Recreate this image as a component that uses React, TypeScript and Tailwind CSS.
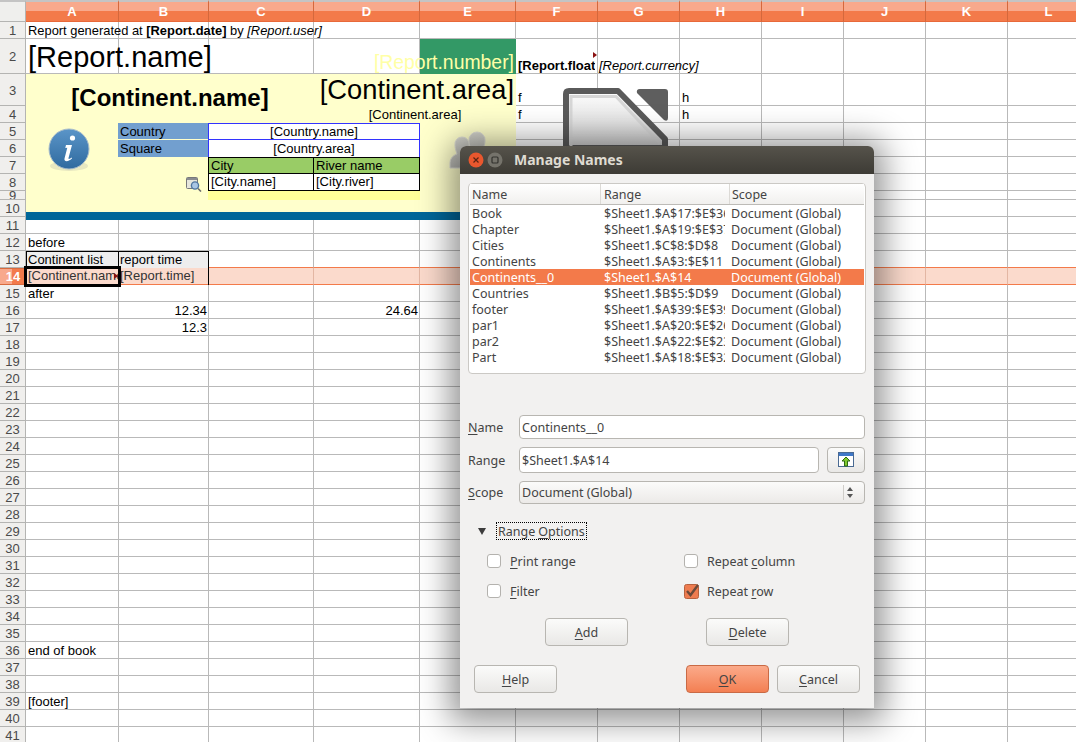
import type { ReactNode } from 'react';

const COLUMNS = ['A', 'B', 'C', 'D', 'E', 'F', 'G', 'H', 'I', 'J', 'K', 'L'];
const ROWS = Array.from({ length: 41 }, (_, i) => i + 1);

const NAMES = [
  ['Book', '$Sheet1.$A$17:$E$36'],
  ['Chapter', '$Sheet1.$A$19:$E$37'],
  ['Cities', '$Sheet1.$C$8:$D$8'],
  ['Continents', '$Sheet1.$A$3:$E$11'],
  ['Continents__0', '$Sheet1.$A$14'],
  ['Countries', '$Sheet1.$B$5:$D$9'],
  ['footer', '$Sheet1.$A$39:$E$39'],
  ['par1', '$Sheet1.$A$20:$E$26'],
  ['par2', '$Sheet1.$A$22:$E$23'],
  ['Part', '$Sheet1.$A$18:$E$32'],
];

function baseCell(row: number, col: number) {
  if (row === 14) return 'bg-[#fbdacc] border-r border-b border-r-[#e3b6a3] border-b-[#f37a4a]';
  if (row === 13) return 'border-r border-b border-r-[#b9b9b9] border-b-[#f37a4a]';
  if (row >= 3 && row <= 10 && col < 5) return 'bg-[#ffffcc]';
  return 'border-r border-b border-[#b9b9b9]';
}

function RowHeader({ row }: { row: number }) {
  const active = row === 14;
  return (
    <div
      style={{ gridColumn: 1, gridRow: row + 1 }}
      className={
        active
          ? 'flex items-center justify-center border-y border-[#d86b3f] bg-gradient-to-r from-[#f8a98c] from-45% to-[#f37a4a] to-45% pt-px font-bold text-white'
          : 'flex items-center justify-center overflow-hidden border-r border-b border-[#b4b4b2] bg-[#f0efed] pt-[2px] text-[#4a4a4a]'
      }
    >
      {row}
    </div>
  );
}

function PeopleIcon() {
  return (
    <svg width="42" height="40" viewBox="0 0 42 40">
      <defs>
        <linearGradient id="people" x1="0" y1="0" x2="0" y2="1">
          <stop offset="0" stopColor="#d2d2cb" />
          <stop offset="1" stopColor="#b5b5b0" />
        </linearGradient>
      </defs>
      <path d="M13 6a7 7 0 0 1 7 8c0 4-2 7-3 9l6 4v10H1v-4c0-5 2-8 7-10-1-3-2-6-2-9a7 7 0 0 1 7-8z" fill="url(#people)" stroke="#dcdcd4" />
      <path d="M28 1a8 8 0 0 1 8 9c0 4-2 7-3 9 5 2 8 6 8 12v6H20V25l3-6c-2-3-3-6-3-9a8 8 0 0 1 8-9z" fill="url(#people)" stroke="#dcdcd4" />
    </svg>
  );
}

function InfoIcon() {
  return (
    <svg width="42" height="44" viewBox="0 0 42 44">
      <defs>
        <linearGradient id="info" x1="0" y1="0" x2="0" y2="1">
          <stop offset="0" stopColor="#5b95c8" />
          <stop offset="1" stopColor="#2f6a9f" />
        </linearGradient>
      </defs>
      <ellipse cx="21" cy="38" rx="19" ry="5" fill="#e8e8c0" />
      <circle cx="21" cy="21" r="20" fill="url(#info)" stroke="#a8bccb" strokeWidth="1" />
      <circle cx="24.5" cy="10" r="2.6" fill="#fff" />
      <path d="M18 17h6l-3.5 13c-.3 1.2 1 1.4 3-.5l.6.8c-2.6 3.2-8.4 4.4-7.6.2l2.8-10.8-2 .2z" fill="#fff" />
    </svg>
  );
}

function MagnifierIcon() {
  return (
    <svg width="16" height="15" viewBox="0 0 16 15">
      <rect x="0.5" y="0.5" width="11" height="11" rx="1" fill="#e6e6dc" stroke="#77787a" />
      <rect x="1" y="1" width="10" height="2" fill="#8a8c90" />
      <circle cx="9" cy="8.5" r="3.6" fill="#a9c6e4" stroke="#4f76a0" strokeWidth="1.4" />
      <path d="M12 11.5l3 3" stroke="#6a6a6a" strokeWidth="1.6" />
    </svg>
  );
}

function DocIcon() {
  return (
    <svg width="106" height="58" viewBox="0 0 106 58">
      <defs>
        <linearGradient id="doc" x1="0" y1="0" x2="0" y2="1">
          <stop offset="0" stopColor="#fdfdfd" />
          <stop offset="1" stopColor="#cfcfcf" />
        </linearGradient>
      </defs>
      <path d="M3 60V6q0-3 3-3h49l47 48v9z" fill="url(#doc)" stroke="#5a5a5a" strokeWidth="6" strokeLinejoin="round" />
      <path d="M8 58V8.500h45l44 47" fill="none" stroke="#d6d6d6" strokeWidth="3" />
      <path d="M77 1h25q3 0 3 3v26q0 4-4 2L74 5q-1-4 3-4z" fill="#5e5e5e" />
    </svg>
  );
}

function Sheet() {
  return (
    <div className="grid grid-cols-[26px_93px_90px_105px_106px_96px_82px_82px_82px_82px_82px_82px_82px] grid-rows-[22px_17px_35px_32px_17px_17px_17px_17px_17px_9px_17px_repeat(31,17px)] font-['Liberation_Sans',sans-serif] text-[13px] leading-[18px] text-black">
      <div className="col-start-1 row-start-1 border-t-2 border-r border-b border-t-[#c4c4c4] border-r-[#b4b4b2] border-b-[#b4b4b2] bg-[#efefed]" />
      {COLUMNS.map((c, i) => (
        <div
          key={c}
          style={{ gridColumn: i + 2, gridRow: 1 }}
          className="flex items-center justify-center border-t-2 border-r border-b border-t-[#c4c4c4] border-r-[#d4683c] border-b-[#e8693a] bg-[linear-gradient(#f8a98c_0,#f8a98c_46%,#f37a4a_46%,#f37a4a_100%)] text-[13px] font-bold text-white"
        >
          {c}
        </div>
      ))}
      {ROWS.map((r) => (
        <RowHeader key={r} row={r} />
      ))}
      {ROWS.flatMap((r) =>
        COLUMNS.map((c, i) => (
          <div key={c + r} style={{ gridColumn: i + 2, gridRow: r + 1 }} className={baseCell(r, i)} />
        )),
      )}

      {/* report header */}
      <div className="col-start-2 row-start-2 whitespace-nowrap pl-[2px] text-[12.9px]">
        Report generated at <b>[Report.date]</b> by <i>[Report.user]</i>
      </div>
      <div className="col-start-2 row-start-3 flex items-center whitespace-nowrap pl-[2px] text-[29px] leading-[34px]">
        [Report.name]
      </div>
      <div className="col-start-6 row-start-3 flex items-end justify-end whitespace-nowrap bg-[#339966] pb-px pr-[2px] text-[19.4px] leading-[22px] text-[#ffffa6]">
        [Report.number]
      </div>
      <div className="col-start-7 row-start-3 flex w-[79px] items-end overflow-hidden whitespace-nowrap pl-[2px] font-bold leading-[17px]">
        [Report.float]
      </div>
      <div className="col-start-7 row-start-3 ml-[77px] mt-[13px] h-0 w-0 border-y-[3px] border-l-[4px] border-y-transparent border-l-[#8a1010]" />
      <div className="col-start-8 row-start-3 flex items-end whitespace-nowrap pl-px italic leading-[17px]">
        [Report.currency]
      </div>

      {/* continent block */}
      <div className="col-[2/5] row-[4/6] flex items-center justify-center pb-[2px] text-[24px] font-bold">
        [Continent.name]
      </div>
      <div className="col-[5/7] row-start-4 flex items-center justify-end whitespace-nowrap pr-[2px] text-[27.3px]">
        [Continent.area]
      </div>
      <div className="col-[5/7] row-start-5 flex items-center justify-center pt-px">[Continent.area]</div>
      <div className="col-start-2 row-[6/10] ml-[22px] mt-[5px]">
        <InfoIcon />
      </div>
      <div className="col-start-3 row-start-6 -ml-px border-b border-[#ffffcc] bg-[#729fcf] pl-[2px]">Country</div>
      <div className="col-start-3 row-start-7 -ml-px bg-[#729fcf] pl-[2px]">Square</div>
      <div className="col-[4/6] row-start-6 -ml-px border border-[#3333ff] bg-white text-center leading-[16px]">[Country.name]</div>
      <div className="col-[4/6] row-start-7 -ml-px border-x border-[#3333ff] bg-white text-center">[Country.area]</div>
      <div className="col-start-4 row-start-8 -ml-px border border-black bg-[#99cc66] pl-[2px] leading-[16px]">City</div>
      <div className="col-start-5 row-start-8 border border-l-0 border-black bg-[#99cc66] pl-[2px] leading-[16px]">River name</div>
      <div className="col-start-4 row-start-9 -ml-px border border-t-0 border-black bg-white pl-[2px] leading-[16px]">[City.name]</div>
      <div className="col-start-5 row-start-9 border-r border-b border-black bg-white pl-[2px] leading-[16px]">[City.river]</div>
      <div className="col-start-3 row-start-9 ml-[67px] mt-[3px]">
        <MagnifierIcon />
      </div>
      <div className="col-[4/6] row-start-10 -ml-px bg-[#ffff99]" />
      <div className="col-start-6 row-[6/10] ml-[29px] mt-[8px]">
        <PeopleIcon />
      </div>
      <div className="col-[2/7] row-[11/13] mt-[12px] h-[8px] bg-[#006699]" />
      <div className="col-start-7 row-start-4 flex items-end pl-[2px] leading-[16px]">f</div>
      <div className="col-start-9 row-start-4 flex items-end pl-[2px] leading-[16px]">h</div>
      <div className="col-start-7 row-start-5 pl-[2px]">f</div>
      <div className="col-start-9 row-start-5 pl-[2px]">h</div>

      {/* continent list */}
      <div className="col-start-2 row-start-13 pl-[2px]">before</div>
      <div className="col-start-2 row-start-14 border-x border-t border-black bg-[#eeeeee] pl-px leading-[16px]">Continent list</div>
      <div className="col-start-3 row-start-14 border-t border-r border-black bg-[#eeeeee] pl-px leading-[16px]">report time</div>
      <div className="relative z-10 col-start-2 row-start-15 overflow-hidden whitespace-nowrap pl-[2px] leading-[16px] text-[#333] outline-[3px] -outline-offset-1 outline-black">
        [Continent.name]
      </div>
      <div className="z-10 col-start-2 row-start-15 ml-[88px] mt-[5px] h-0 w-0 border-y-[3px] border-l-[4px] border-y-transparent border-l-[#8a1010]" />
      <div className="col-start-3 row-start-15 border-r border-black pl-px leading-[16px] text-[#333]">[Report.time]</div>
      <div className="col-start-2 row-start-16 pl-[2px]">after</div>
      <div className="col-start-3 row-start-17 pr-[2px] text-right">12.34</div>
      <div className="col-start-5 row-start-17 pr-[2px] text-right">24.64</div>
      <div className="col-start-3 row-start-18 pr-[2px] text-right">12.3</div>
      <div className="col-start-2 row-start-37 pl-[2px]">end of book</div>
      <div className="col-start-2 row-start-40 pl-[2px]">[footer]</div>
    </div>
  );
}

function Mn({ children }: { children: ReactNode }) {
  return <span className="underline underline-offset-2">{children}</span>;
}

function DialogButton({ className, children }: { className?: string; children: ReactNode }) {
  return (
    <button
      className={`flex h-[28px] w-[83px] items-center justify-center rounded-[4px] border pt-[2px] ${
        className ?? 'border-[#b8b6b1] bg-gradient-to-b from-[#fbfbfa] to-[#e9e8e6]'
      }`}
    >
      {children}
    </button>
  );
}

function CheckBox({ checked }: { checked?: boolean }) {
  if (checked) {
    return (
      <svg width="16" height="16" viewBox="0 0 16 16" className="shrink-0">
        <rect x="0.5" y="1.5" width="14" height="14" rx="2" fill="#ee7c50" stroke="#b7623f" />
        <path d="M3 8l3.500 4L14 2" fill="none" stroke="#6b4a3a" strokeWidth="2.4" />
      </svg>
    );
  }
  return <span className="block h-[14px] w-[14px] shrink-0 rounded-[3px] border border-[#b4b2ae] bg-white" />;
}

function Dialog() {
  return (
    <div className="absolute left-[460px] top-[146px] z-20 flex h-[562px] w-[414px] flex-col rounded-t-[6px] bg-[#f2f1f0] font-['Noto_Sans',sans-serif] text-[12.5px] leading-[16px] text-[#444] shadow-[0_4px_32px_10px_rgba(0,0,0,0.42)]">
      <div className="flex h-[28px] shrink-0 items-center rounded-t-[6px] bg-gradient-to-b from-[#56534b] to-[#3d3b35] pl-[8px]">
        <svg width="16" height="16" viewBox="0 0 16 16">
          <circle cx="8" cy="8" r="7.500" fill="#e9572e" />
          <path d="M5.500 5.500l5 5m0-5l-5 5" stroke="#5a2414" strokeWidth="1.2" />
        </svg>
        <svg width="16" height="16" viewBox="0 0 16 16" className="ml-[3px]">
          <circle cx="8" cy="8" r="7.500" fill="#75736b" />
          <rect x="5" y="5" width="6" height="6" rx="1" fill="none" stroke="#33322e" strokeWidth="1.2" />
        </svg>
        <span className="ml-[11px] text-[14px] font-bold text-[#dfdbd2]">Manage Names</span>
      </div>

      <div className="flex flex-1 flex-col pl-[8px] pr-[9px] pt-[9px]">
        <div className="h-[191px] w-[398px] rounded-[4px] border border-[#cbc9c5] bg-white px-px">
          <div className="flex h-[21px] border-b border-[#bdbbb7] bg-gradient-to-b from-white to-[#f1f0ee]">
            <div className="w-[131px] border-r border-[#dcdad6] pl-[2px] pt-[3px]">Name</div>
            <div className="w-[129px] border-r border-[#dcdad6] pl-[3px] pt-[3px]">Range</div>
            <div className="pl-[2px] pt-[3px]">Scope</div>
          </div>
          {NAMES.map(([name, range]) => (
            <div
              key={name}
              className={`flex h-[16px] pt-px ${name === 'Continents__0' ? 'bg-[#f37a4a] text-white' : ''}`}
            >
              <div className="w-[131px] pl-[2px]">{name}</div>
              <div className="w-[124px] overflow-hidden whitespace-nowrap pl-[3px]">{range}</div>
              <div className="pl-[6px]">Document (Global)</div>
            </div>
          ))}
        </div>

        <div className="mt-[41px] flex h-[24px] items-center">
          <label className="w-[51px] pt-[2px]">
            <Mn>N</Mn>ame
          </label>
          <div className="flex h-full flex-1 items-center rounded-[4px] border border-[#b8b6b1] bg-white pl-[2px] pt-[2px]">
            Continents__0
          </div>
        </div>
        <div className="mt-[8px] flex h-[26px] items-center">
          <label className="w-[51px] pt-[2px]">Range</label>
          <div className="flex h-full w-[300px] items-center rounded-[4px] border border-[#b8b6b1] bg-white pl-[2px] pt-[2px]">
            $Sheet1.$A$14
          </div>
          <button className="ml-[8px] flex h-full w-[38px] items-center justify-center rounded-[4px] border border-[#b8b6b1] bg-gradient-to-b from-[#fbfbfa] to-[#e9e8e6]">
            <svg width="16" height="16" viewBox="0 0 16 16">
              <rect x="0.500" y="0.500" width="15" height="14" fill="#fff" stroke="#4a6a92" />
              <rect x="1" y="1" width="14" height="3" fill="#3f78c8" />
              <path d="M8 5l4 4H9.500v5h-3V9H4z" fill="#7fc92f" stroke="#2f6a12" />
            </svg>
          </button>
        </div>
        <div className="mt-[8px] flex h-[23px] items-center">
          <label className="w-[51px]">
            <Mn>S</Mn>cope
          </label>
          <div className="flex h-full flex-1 items-center justify-between rounded-[4px] border border-[#b8b6b1] bg-gradient-to-b from-[#fbfbfa] to-[#eceae8] pl-[2px]">
            Document (Global)
            <div className="flex h-[15px] w-[21px] flex-col items-start justify-center gap-[3px] border-l border-[#cfcdc9] pl-[3px]">
              <span className="h-0 w-0 border-x-[3.5px] border-b-[4px] border-x-transparent border-b-[#555]" />
              <span className="h-0 w-0 border-x-[3.5px] border-t-[4px] border-x-transparent border-t-[#555]" />
            </div>
          </div>
        </div>

        <div className="ml-[10px] mt-[18px] flex h-[18px] items-center">
          <span className="h-0 w-0 border-x-[4.5px] border-t-[7px] border-x-transparent border-t-[#3c3c3c]" />
          <span className="ml-[10px] flex h-full items-center border border-dotted border-black px-px pt-[2px]">
            Range <span className="ml-[3px]"><Mn>O</Mn>ptions</span>
          </span>
        </div>

        <div className="ml-[19px] mt-[14px] grid grid-cols-[197px_1fr] gap-y-[16px]">
          <label className="flex h-[14px] items-center gap-[9px]">
            <CheckBox />
            <span className="pt-[2px]"><Mn>P</Mn>rint range</span>
          </label>
          <label className="flex h-[14px] items-center gap-[9px]">
            <CheckBox />
            <span className="pt-[2px]">Repeat <Mn>c</Mn>olumn</span>
          </label>
          <label className="flex h-[14px] items-center gap-[9px]">
            <CheckBox />
            <span className="pt-[2px]"><Mn>F</Mn>ilter</span>
          </label>
          <label className="flex h-[14px] items-center gap-[7px]">
            <CheckBox checked />
            <span className="pt-[2px]">Repeat <Mn>r</Mn>ow</span>
          </label>
        </div>

        <div className="ml-[77px] mt-[20px] flex gap-[78px]">
          <DialogButton><span><Mn>A</Mn>dd</span></DialogButton>
          <DialogButton><span><Mn>D</Mn>elete</span></DialogButton>
        </div>

        <div className="ml-[6px] mt-[19px] flex">
          <DialogButton><span><Mn>H</Mn>elp</span></DialogButton>
          <div className="ml-[129px]">
            <DialogButton className="border-[#c96a45] bg-gradient-to-b from-[#fbaa8a] to-[#f37f52]">
              <span><Mn>O</Mn>K</span>
            </DialogButton>
          </div>
          <div className="ml-[8px]">
            <DialogButton><span><Mn>C</Mn>ancel</span></DialogButton>
          </div>
        </div>
      </div>
    </div>
  );
}

export default function App() {
  return (
    <div className="relative h-[742px] w-[1076px] overflow-hidden bg-white">
      <Sheet />
      {/* libreoffice watermark, floats over the cells */}
      <div className="absolute left-[563px] top-[88px] z-10">
        <DocIcon />
      </div>
      <Dialog />
    </div>
  );
}
